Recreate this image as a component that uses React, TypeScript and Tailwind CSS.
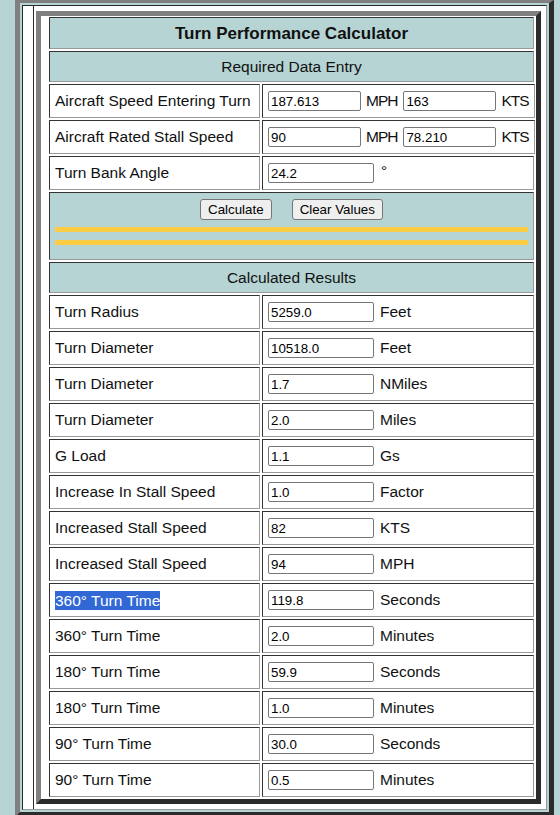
import React from "react";

const cell =
  "border border-t-[#333333] border-l-[#333333] border-r-[#9a9a9a] border-b-[#9a9a9a]";

function Header({ children, bold, h }: { children: React.ReactNode; bold?: boolean; h: string }) {
  return (
    <div
      className={`${cell} ${h} bg-[#b5d4d3] flex items-center justify-center text-[#111] ${
        bold ? "font-bold text-[17px] pt-[2px]" : "text-[15.5px]"
      }`}
    >
      {children}
    </div>
  );
}

function Input({ value, w }: { value: string; w: string }) {
  return (
    <input
      readOnly
      value={value}
      className={`${w} shrink-0 h-[20px] border border-[#767676] rounded-[2px] bg-white px-[2px] text-[13.33px] text-black font-['Liberation_Sans',Arial,sans-serif] outline-none`}
    />
  );
}

function Row({ label, children, selected }: { label: string; children: React.ReactNode; selected?: boolean }) {
  return (
    <div className="flex gap-[2px] h-[34px]">
      <div className={`${cell} w-[211px] shrink-0 bg-white flex items-center px-[5px] text-[15.5px] text-[#111] whitespace-nowrap`}>
        {selected ? (
          <span className="bg-[#3168d6] text-white leading-[19px]">{label}</span>
        ) : (
          label
        )}
      </div>
      <div className={`${cell} flex-1 bg-white flex items-center px-[5px] text-[15.5px] text-[#111] whitespace-nowrap`}>
        {children}
      </div>
    </div>
  );
}

const results: [string, string, string][] = [
  ["Turn Radius", "5259.0", "Feet"],
  ["Turn Diameter", "10518.0", "Feet"],
  ["Turn Diameter", "1.7", "NMiles"],
  ["Turn Diameter", "2.0", "Miles"],
  ["G Load", "1.1", "Gs"],
  ["Increase In Stall Speed", "1.0", "Factor"],
  ["Increased Stall Speed", "82", "KTS"],
  ["Increased Stall Speed", "94", "MPH"],
  ["360° Turn Time", "119.8", "Seconds"],
  ["360° Turn Time", "2.0", "Minutes"],
  ["180° Turn Time", "59.9", "Seconds"],
  ["180° Turn Time", "1.0", "Minutes"],
  ["90° Turn Time", "30.0", "Seconds"],
  ["90° Turn Time", "0.5", "Minutes"],
];

export default function App() {
  return (
    <div className="h-[815px] overflow-hidden bg-[#b5d4d3] pl-[15px] font-['Liberation_Sans',Arial,sans-serif]">
      <div className="w-[539px] border-[5px] border-t-[3px] border-t-[#808080] border-l-[#808080] border-r-[#2b2b2b] border-b-[#2b2b2b] p-[2px]">
        <div className="border border-t-[#2b2b2b] border-l-[#2b2b2b] border-r-[#9a9a9a] border-b-[#9a9a9a] bg-white pl-[10px]">
          <div className="border-l border-l-[#2b2b2b] pl-[2px] pr-[5px] py-[5px]">
            <div className="border-[5px] border-t-[#808080] border-l-[#808080] border-r-[#2b2b2b] border-b-[#2b2b2b] bg-white pl-[8px] pr-[2px] pt-[1px] pb-[2px] flex flex-col gap-[2px]">
              <Header bold h="h-[32px]">Turn Performance Calculator</Header>
              <Header h="h-[31px]">Required Data Entry</Header>
              <Row label="Aircraft Speed Entering Turn">
                <Input value="187.613" w="w-[93px]" />
                <span className="ml-[5px] mr-[6px] tracking-[-1px]">MPH</span>
                <Input value="163" w="w-[93px]" />
                <span className="ml-[5px] tracking-[-1px]">KTS</span>
              </Row>
              <Row label="Aircraft Rated Stall Speed">
                <Input value="90" w="w-[93px]" />
                <span className="ml-[5px] mr-[6px] tracking-[-1px]">MPH</span>
                <Input value="78.210" w="w-[93px]" />
                <span className="ml-[5px] tracking-[-1px]">KTS</span>
              </Row>
              <Row label="Turn Bank Angle">
                <Input value="24.2" w="w-[106px]" />
                <span className="ml-[7px] -mt-[4px]">°</span>
              </Row>
              <div className={`${cell} h-[68px] bg-[#b5d4d3] px-[5px] pt-[6px] flex flex-col`}>
                <div className="flex justify-center gap-[20px]">
                  <button className="h-[21px] px-[7px] border border-[#767676] rounded-[3px] bg-[#efefef] text-[13.33px] text-black leading-none">
                    Calculate
                  </button>
                  <button className="h-[21px] px-[7px] border border-[#767676] rounded-[3px] bg-[#efefef] text-[13.33px] text-black leading-none">
                    Clear Values
                  </button>
                </div>
                <div className="mt-[7px] h-[5px] bg-[#fdcd45]" />
                <div className="mt-[8px] h-[5px] bg-[#fdcd45]" />
              </div>
              <Header h="h-[31px]">Calculated Results</Header>
              {results.map(([label, value, unit], i) => (
                <Row key={i} label={label} selected={i === 8}>
                  <Input value={value} w="w-[106px]" />
                  <span className="ml-[6px]">{unit}</span>
                </Row>
              ))}
            </div>
          </div>
        </div>
      </div>
    </div>
  );
}
